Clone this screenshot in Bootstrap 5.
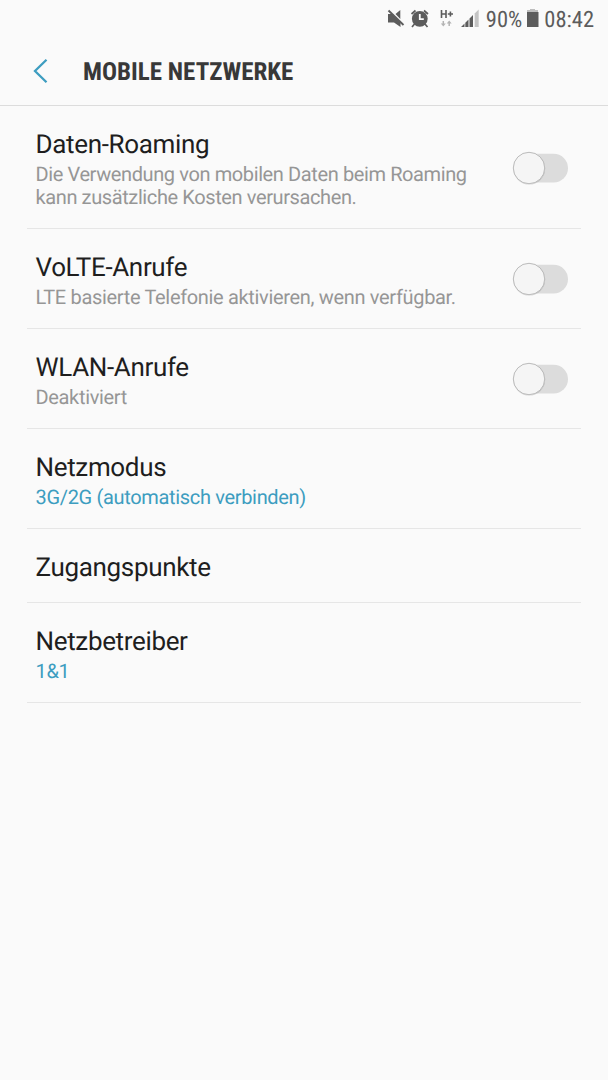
<!DOCTYPE html>
<html lang="de">
<head>
<meta charset="utf-8">
<meta name="viewport" content="width=device-width, initial-scale=1">
<title>Mobile Netzwerke</title>
<link rel="stylesheet" href="https://cdn.jsdelivr.net/npm/bootstrap@5.3.0/dist/css/bootstrap.min.css">
<style>
  body { background: #fafafa; color: #1e1e1e; font-family: Roboto, sans-serif; text-rendering: geometricPrecision; }
  .status-bar { height: 38px; padding-right: 14px; }
  .status-bar svg { display: block; }
  .condensed { font-family: "Roboto Condensed", Roboto, sans-serif; font-stretch: 75%; white-space: nowrap; }
  .status-text { font-size: 22.5px; line-height: 36px; padding-top: 2px; color: #5c5c5c; }
  .signal-icons { margin-right: 6px; }
  .title-bar { height: 68px; padding-left: 33px; border-bottom: 1px solid #dcdcdc; }
  .title-bar h1 { font-size: 25px; line-height: 30px; font-weight: 700; color: #383838; margin: 2px 0 0 35px; }
  .title-bar svg { margin-bottom: 1px; }
  .settings { margin: 0 27px; }
  .setting { padding: 24px 13px 19px 8.5px; border-bottom: 1px solid #e6e6e6; }
  .setting-name { font-size: 26px; line-height: 30px; font-weight: 400; letter-spacing: -.34px; }
  .setting-note { font-size: 20px; line-height: 23px; color: #969696; margin: 3px 0 0; letter-spacing: -.33px; }
  .setting-note-long { letter-spacing: -.39px; }
  .setting-value { color: #3d9dc0; }
  .toggle { flex: none; width: 56px; height: 34px; margin-bottom: 4px; }
</style>
</head>
<body>
<svg class="d-none">
  <symbol id="toggle-off" viewBox="0 0 56 34">
    <rect x="2" y="2.7" width="54" height="28.8" rx="14.4" fill="#dcdcdc"/>
    <circle cx="17.2" cy="17.6" r="16" fill="#000" opacity=".12"/>
    <circle cx="17" cy="17" r="15.7" fill="#f5f5f5" stroke="#bbb" stroke-width="1"/>
  </symbol>
</svg>
<header>
  <div class="status-bar d-flex align-items-center justify-content-end">
    <svg class="signal-icons" width="96" height="38" viewBox="384 0 96 38" fill="#5c5c5c">
      <path d="M388 14h4.500l2 2 6 6V27l-6.500-4.500H388zM395.500 14l4.800-4v9z"/>
      <path d="M388.500 10.500l15 14.500" stroke="#5c5c5c" stroke-width="1.900" fill="none"/>
      <circle cx="419.800" cy="18.800" r="7.900"/>
      <path d="M411.500 14l4-3.500M428 14l-4-3.500M414.500 24l-2.500 3M425 24l2.500 3" stroke="#5c5c5c" stroke-width="1.700" fill="none"/>
      <path d="M419.800 14v5.200h4" stroke="#fafafa" stroke-width="1.800" fill="none"/>
      <path d="M441.500 10v8M446 10v8M441.500 14H446M447.800 14h5.200M450.400 11.400v5.200" stroke="#5c5c5c" stroke-width="1.600" fill="none"/>
      <path d="M443.300 21v3.500M449.200 26v-3.500" stroke="#b4b4b4" stroke-width="1.500"/>
      <path d="M440.800 23.600h5l-2.500 2.900zM446.700 23.400h5l-2.500-2.900z" fill="#b4b4b4"/>
      <path d="M461 27l3.500-3.500V27zM465.300 22.800l3.200-3.200V27h-3.200zM469.500 18.500l3.500-3.500v12h-3.500z"/>
      <path d="M474.700 13.500l4-4V27h-4z" fill="#c4c4c4"/>
    </svg>
    <span class="condensed status-text">90%</span>
    <svg class="mx-1" width="14" height="38" viewBox="526 0 14 38">
      <path d="M527 12v-2h3V9h5v1h3v2z" fill="#bdbdbd"/>
      <path d="M527 12h11.500v15H527z" fill="#5c5c5c"/>
    </svg>
    <span class="condensed status-text">08:42</span>
  </div>
  <div class="title-bar d-flex align-items-center">
    <svg width="15" height="26" viewBox="0 0 15 26"><path d="M13.500 1.800L2 13l11.500 11.200" fill="none" stroke="#3d9dc0" stroke-width="2.300"/></svg>
    <h1 class="condensed">MOBILE NETZWERKE</h1>
  </div>
</header>
<main class="settings">
  <section class="setting d-flex align-items-center justify-content-between">
    <div><h2 class="setting-name mb-0">Daten-Roaming</h2>
      <p class="setting-note setting-note-long">Die Verwendung von mobilen Daten beim Roaming<br>kann zusätzliche Kosten verursachen.</p></div>
    <svg class="toggle" role="switch" aria-checked="false"><use href="#toggle-off"/></svg>
  </section>
  <section class="setting d-flex align-items-center justify-content-between">
    <div><h2 class="setting-name mb-0">VoLTE-Anrufe</h2>
      <p class="setting-note">LTE basierte Telefonie aktivieren, wenn verfügbar.</p></div>
    <svg class="toggle" role="switch" aria-checked="false"><use href="#toggle-off"/></svg>
  </section>
  <section class="setting d-flex align-items-center justify-content-between">
    <div><h2 class="setting-name mb-0">WLAN-Anrufe</h2>
      <p class="setting-note">Deaktiviert</p></div>
    <svg class="toggle" role="switch" aria-checked="false"><use href="#toggle-off"/></svg>
  </section>
  <section class="setting">
    <h2 class="setting-name mb-0">Netzmodus</h2>
    <p class="setting-note setting-value">3G/2G (automatisch verbinden)</p>
  </section>
  <section class="setting">
    <h2 class="setting-name mb-0">Zugangspunkte</h2>
  </section>
  <section class="setting">
    <h2 class="setting-name mb-0">Netzbetreiber</h2>
    <p class="setting-note setting-value">1&amp;1</p>
  </section>
</main>
<script src="https://cdn.jsdelivr.net/npm/bootstrap@5.3.0/dist/js/bootstrap.bundle.min.js"></script>
</body>
</html>
